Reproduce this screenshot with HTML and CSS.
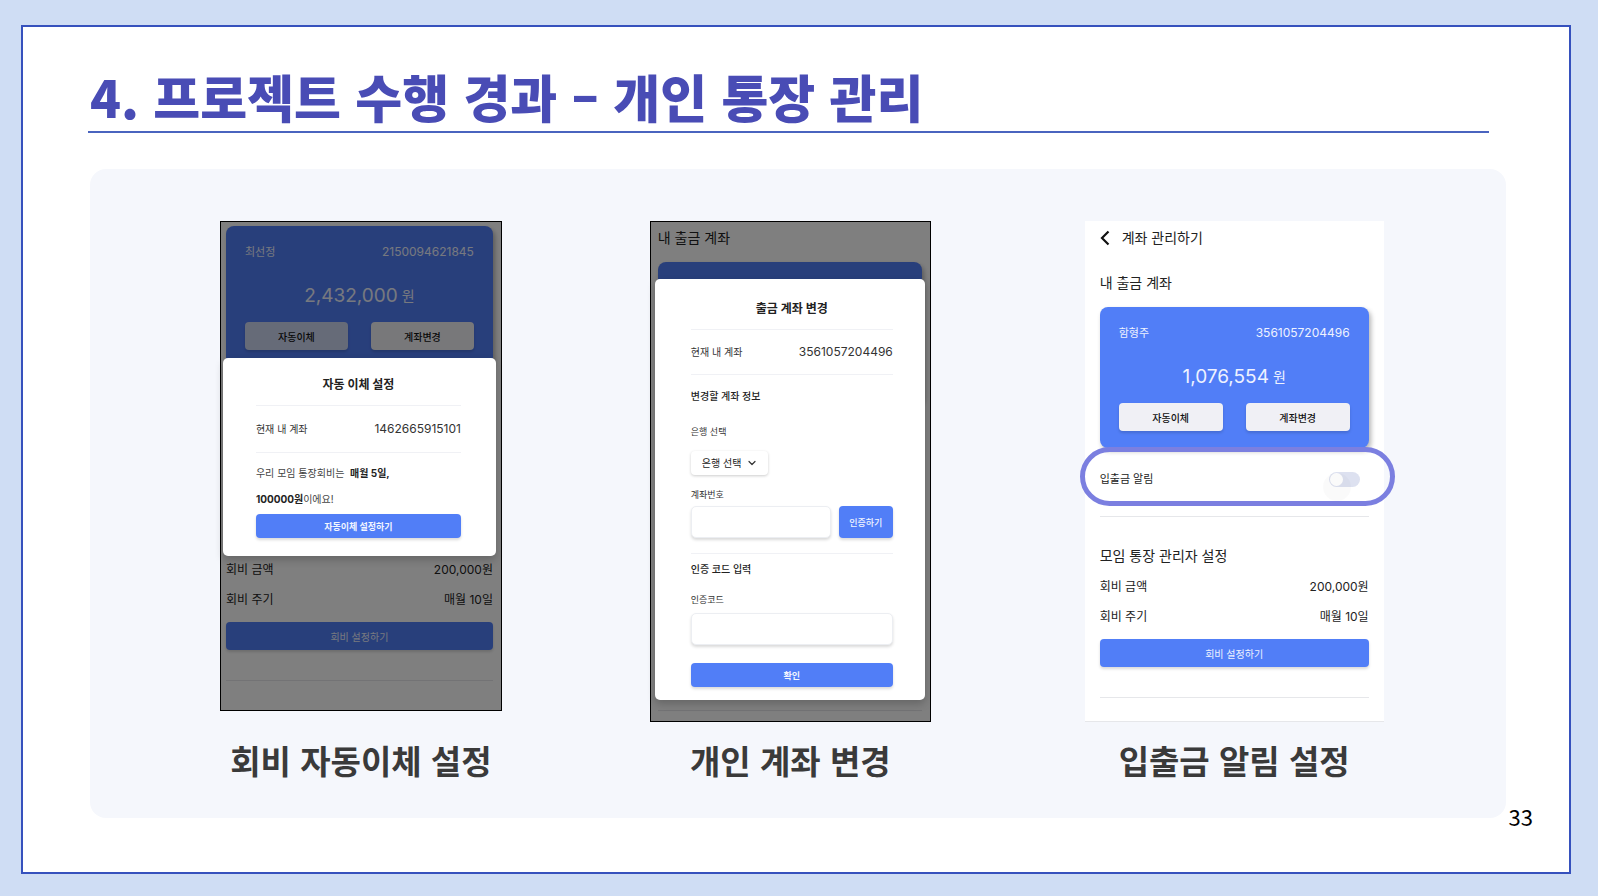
FILE: index.html
```html
<!DOCTYPE html>
<html lang="ko">
<head>
    <meta charset="UTF-8">
    <meta name="viewport" content="width=device-width, initial-scale=1.0">
    <title>프로젝트 수행 경과 – 개인 통장 관리</title>
    <link rel="stylesheet" href="styles.css">
</head>
<body>
    <div class="slide">
        <h1 class="slide-title">4. 프로젝트 수행 경과 – 개인 통장 관리</h1>

        <div class="slide-body">
            <main class="panel">
                <!-- 회비 자동이체 설정 -->
                <figure>
                    <div class="screen screen-transfer">
                        <section class="account-card">
                            <div class="account-info">
                                <span>최선정</span>
                                <span class="number">2150094621845</span>
                            </div>
                            <p class="balance">2,432,000 <small>원</small></p>
                            <div class="card-buttons">
                                <button type="button" class="active">자동이체</button>
                                <button type="button">계좌변경</button>
                            </div>
                        </section>
                        <section class="fees">
                            <div class="fee-row"><span>회비 금액</span><span>200,000원</span></div>
                            <div class="fee-row"><span>회비 주기</span><span>매월 10일</span></div>
                            <button type="button" class="fee-btn">회비 설정하기</button>
                        </section>
                        <hr class="end-line">
                        <div class="dim">
                            <div class="modal">
                                <h2>자동 이체 설정</h2>
                                <div class="current">
                                    <span>현재 내 계좌</span>
                                    <span class="number">1462665915101</span>
                                </div>
                                <p class="notice">우리 모임 통장회비는&nbsp; <b>매월 5일,</b><br><b>100000원</b>이에요!</p>
                                <button type="button" class="primary">자동이체 설정하기</button>
                            </div>
                        </div>
                    </div>
                    <figcaption>회비 자동이체 설정</figcaption>
                </figure>

                <!-- 개인 계좌 변경 -->
                <figure>
                    <div class="screen screen-change">
                        <h3>내 출금 계좌</h3>
                        <div class="account-card"></div>
                        <hr class="end-line">
                        <div class="dim">
                            <form class="modal">
                                <h2>출금 계좌 변경</h2>
                                <div class="current">
                                    <span>현재 내 계좌</span>
                                    <span class="number">3561057204496</span>
                                </div>
                                <h4>변경할 계좌 정보</h4>
                                <label class="bank-label" for="bank">은행 선택</label>
                                <div class="select-box">
                                    <select id="bank">
                                        <option>은행 선택</option>
                                    </select>
                                    <svg viewBox="0 0 10 10" width="10" height="10"><path d="M2 3.5 L5 6.5 L8 3.5" fill="none" stroke="#333" stroke-width="1.2" stroke-linecap="round" stroke-linejoin="round"/></svg>
                                </div>
                                <label for="account">계좌번호</label>
                                <div class="verify">
                                    <input type="text" id="account">
                                    <button type="button" class="primary">인증하기</button>
                                </div>
                                <h4 class="code-title">인증 코드 입력</h4>
                                <label for="code">인증코드</label>
                                <input type="text" id="code">
                                <button type="button" class="primary confirm">확인</button>
                            </form>
                        </div>
                    </div>
                    <figcaption>개인 계좌 변경</figcaption>
                </figure>

                <!-- 입출금 알림 설정 -->
                <figure>
                    <div class="screen screen-alarm">
                        <header class="app-header">
                            <svg viewBox="0 0 10 16" width="10" height="16"><path d="M8.5 1.5 L2 8 L8.5 14.5" fill="none" stroke="#111" stroke-width="2.2"/></svg>
                            <span>계좌 관리하기</span>
                        </header>
                        <h3>내 출금 계좌</h3>
                        <section class="account-card">
                            <div class="account-info">
                                <span>함형주</span>
                                <span class="number">3561057204496</span>
                            </div>
                            <p class="balance">1,076,554 <small>원</small></p>
                            <div class="card-buttons">
                                <button type="button">자동이체</button>
                                <button type="button">계좌변경</button>
                            </div>
                        </section>
                        <div class="alarm">
                            <label for="alarm">입출금 알림</label>
                            <input type="checkbox" id="alarm" class="toggle">
                            <span class="highlight"></span>
                        </div>
                        <hr>
                        <h3 class="manager-title">모임 통장 관리자 설정</h3>
                        <section class="fees">
                            <div class="fee-row"><span>회비 금액</span><span>200,000원</span></div>
                            <div class="fee-row"><span>회비 주기</span><span>매월 10일</span></div>
                            <button type="button" class="fee-btn">회비 설정하기</button>
                        </section>
                        <hr class="end-line">
                    </div>
                    <figcaption>입출금 알림 설정</figcaption>
                </figure>
            </main>
            <span class="page-number">33</span>
        </div>
    </div>
</body>
</html>
```
FILE: styles.css
```css
* {
    margin: 0;
    padding: 0;
    box-sizing: border-box;
}

body {
    min-height: 100vh;
    padding: 25px 27px 22px 21px;
    display: flex;
    background: #cfddf4;
    font-family: Inter, "Noto Sans CJK KR", sans-serif;
    color: #222;
}

button,
input,
select {
    font-family: inherit;
    border: none;
}

hr {
    height: 1px;
    border: none;
    background: #e6e7ea;
}

.slide {
    flex: 1;
    padding-top: 39px;
    background: white;
    border: 2px solid #3651bd;
}

.slide-title {
    margin: 0 80px 0 65px;
    padding: 0 0 5px 2px;
    border-bottom: 2px solid #4a64bf;
    font-family: "Noto Sans CJK KR", sans-serif;
    font-size: 51px;
    font-weight: 900;
    line-height: 60px;
    color: #494cb5;
}

.slide-body {
    display: flex;
    gap: 3px;
    margin: 36px 36px 0 67px;
}

.panel {
    flex: 1;
    display: grid;
    grid-template-columns: 430fr 429fr 459fr;
    padding: 52px 42px 38px 56px;
    border-radius: 16px;
    background: #f5f7fc;
}

.page-number {
    align-self: flex-end;
    margin-bottom: -13px;
    font-family: "Noto Sans CJK KR", sans-serif;
    font-size: 22px;
    line-height: 30px;
    color: #000;
}

figure {
    display: flex;
    flex-direction: column;
    align-items: center;
    justify-content: space-between;
    gap: 18px;
}

figcaption {
    font-family: "Noto Sans CJK KR", sans-serif;
    font-size: 33px;
    font-weight: 700;
    line-height: 40px;
    color: #3a3a3a;
}

/* 앱 화면 */
.screen {
    position: relative;
    display: flex;
    flex-direction: column;
    background: white;
}

.screen h3 {
    font-size: 14px;
    font-weight: 400;
    line-height: 20px;
}

.end-line {
    margin-top: 30px;
}

.screen-transfer {
    width: 282px;
    height: 490px;
    padding: 4px 8px 0 5px;
    border: 1px solid #000;
}

.screen-transfer .fees {
    margin-top: 193px;
}

.screen-change {
    width: 281px;
    height: 501px;
    padding: 6px 8px 10px 7px;
    border: 1px solid #000;
}

.screen-change .account-card {
    height: 142px;
    margin-top: 14px;
}

.screen-change .end-line {
    margin-top: auto;
}

.screen-alarm {
    width: 299px;
    height: 501px;
    padding: 7px 15px 0;
    border-bottom: 1px solid #e6e7ea;
}

/* 계좌 카드 */
.account-card {
    padding: 16px 19px 17px;
    border-radius: 8px;
    background: #517ef7;
    box-shadow: 2px 3px 5px rgba(0,0,0,0.3);
    color: #eef2ff;
}

.account-info {
    display: flex;
    justify-content: space-between;
    font-size: 11px;
    line-height: 20px;
}

.number {
    font-size: 12px;
}

.balance {
    display: flex;
    align-items: center;
    justify-content: center;
    gap: 4px;
    height: 28px;
    margin: 20px 0 12px;
    font-size: 19px;
    line-height: 28px;
}

.balance small {
    font-size: 14px;
}

.card-buttons {
    display: flex;
    justify-content: space-between;
    gap: 23px;
}

.card-buttons button {
    flex: 1;
    height: 28px;
    border-radius: 4px;
    background: #f0f0f5;
    box-shadow: 0 2px 3px rgba(0,0,0,0.15);
    font-size: 10px;
    font-weight: 500;
    color: #111;
}

.card-buttons .active {
    background: #ccd6f0;
}

/* 회비 */
.fee-row {
    display: flex;
    justify-content: space-between;
    margin-bottom: 10px;
    font-size: 12px;
    line-height: 20px;
}

.fee-btn {
    width: 100%;
    height: 28px;
    margin-top: 2px;
    border-radius: 4px;
    background: #517ef7;
    box-shadow: 0 2px 3px rgba(0,0,0,0.15);
    font-size: 10px;
    color: #eef2ff;
}

/* 모달 */
.dim {
    position: absolute;
    inset: 0;
    background: rgba(0,0,0,0.5);
}

.screen-transfer .dim {
    padding: 136px 5px 0 2px;
}

.screen-change .dim {
    padding: 57px 5px 0 4px;
}

.modal {
    padding: 17px 35px 18px 33px;
    border-radius: 5px;
    background: white;
    box-shadow: 0 4px 8px rgba(0,0,0,0.2);
}

.modal h2 {
    padding-bottom: 10px;
    text-align: center;
    font-size: 12px;
    font-weight: 700;
    line-height: 20px;
}

.current {
    display: flex;
    justify-content: space-between;
    padding: 12px 0;
    border-top: 1px solid #f0f1f5;
    border-bottom: 1px solid #f0f1f5;
    font-size: 10px;
    line-height: 22px;
    color: #333;
}

.notice {
    padding: 7px 0 2px;
    font-size: 10px;
    line-height: 26px;
    color: #444;
}

.notice b {
    color: #222;
}

.primary {
    border-radius: 4px;
    background: #517ef7;
    box-shadow: 0 2px 3px rgba(0,0,0,0.15);
    font-size: 9px;
    font-weight: 700;
    color: #f2f5ff;
}

.modal > .primary {
    display: block;
    width: 100%;
    height: 24px;
}

.screen-change .modal {
    padding: 20px 32px 13px 36px;
}

.screen-change .current {
    padding: 11px 0;
}

.modal h4 {
    padding-top: 11px;
    font-size: 10px;
    font-weight: 500;
    line-height: 20px;
}

.modal label {
    display: block;
    font-size: 9px;
    line-height: 16px;
    color: #333;
}

.modal .bank-label {
    margin: 18px 0 11px;
}

.select-box {
    position: relative;
    width: 77px;
    margin-bottom: 12px;
}

.select-box select {
    display: block;
    width: 100%;
    height: 24px;
    padding-left: 11px;
    appearance: none;
    border-radius: 4px;
    background: white;
    box-shadow: 0 1px 3px rgba(0,0,0,0.2);
    font-size: 10px;
    color: #222;
}

.select-box svg {
    position: absolute;
    top: 7px;
    right: 11px;
}

.modal input {
    display: block;
    width: 100%;
    height: 32px;
    padding: 0 8px;
    border: 1px solid #eceef2;
    border-radius: 5px;
    background: white;
    box-shadow: 0 2px 3px rgba(0,0,0,0.15);
}

.verify {
    display: flex;
    gap: 8px;
    margin-top: 3px;
    padding-bottom: 15px;
    border-bottom: 1px solid #f0f1f5;
}

.verify .primary {
    flex: none;
    width: 54px;
    height: 32px;
    font-weight: 500;
}

.modal .code-title {
    padding: 5px 0 13px;
}

.modal #code {
    margin: 5px 0 18px;
}

/* 알림 화면 */
.app-header {
    display: flex;
    align-items: center;
    gap: 12px;
    margin-bottom: 25px;
    font-size: 14px;
    line-height: 20px;
}

.screen-alarm .account-card {
    margin-top: 14px;
}

.alarm {
    position: relative;
    display: flex;
    align-items: center;
    justify-content: space-between;
    margin: 21px 0 27px;
    padding-right: 9px;
    font-size: 11px;
    line-height: 20px;
}

.toggle {
    position: relative;
    width: 31px;
    height: 15px;
    appearance: none;
    border-radius: 8px;
    background: #dde1f0;
}

.toggle::before {
    content: "";
    position: absolute;
    top: 1px;
    left: 1px;
    width: 13px;
    height: 13px;
    border-radius: 50%;
    background: white;
}

.toggle::after {
    content: "";
    position: absolute;
    top: 1px;
    left: -6px;
    width: 28px;
    height: 28px;
    border-radius: 50%;
    background: rgba(0,0,0,0.02);
}

.highlight {
    position: absolute;
    inset: -22px -26px -17px -20px;
    border: 5px solid #7b7fe0;
    border-radius: 30px;
    pointer-events: none;
}

.screen-alarm .manager-title {
    margin: 29px 0 11px;
}
```
